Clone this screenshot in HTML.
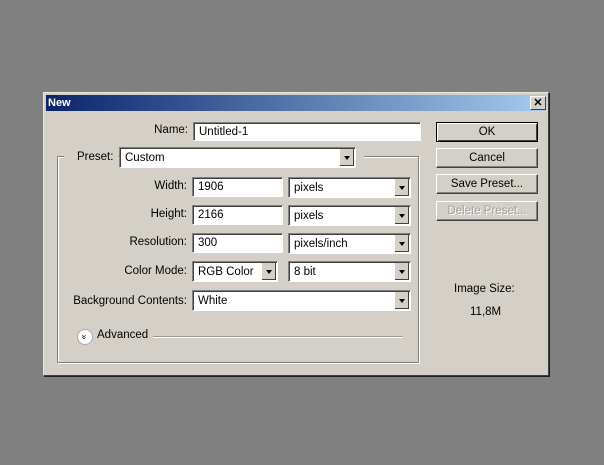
<!DOCTYPE html>
<html><head><style>
body{margin:0;width:604px;height:465px;background:#808080;position:relative;overflow:hidden;font-family:"Liberation Sans",sans-serif;font-size:11.5px;color:#000}
.a{position:absolute}
.dlg{left:43px;top:92px;width:504px;height:282px;background:#d4d0c8;border:1px solid;border-color:#e8e6e0 #404040 #404040 #e8e6e0;box-shadow:1px 1px 0 #202020}
.title{left:46px;top:95px;width:500px;height:16px;background:linear-gradient(90deg,#0a246a,#a6caf0);color:#fff;font-weight:bold;font-size:11px;line-height:16px;text-indent:2px}
.x{left:530px;top:96px;width:14px;height:12px;background:#d4d0c8;border:1px solid;border-color:#fff #404040 #404040 #fff;font-size:11px;line-height:12px;text-align:center;font-weight:bold;color:#000}
.in{background:#fff;border:1px solid;border-color:#808080 #fff #fff #808080;box-shadow:inset 1px 1px 0 #404040;height:18px;line-height:18px;padding-left:5px;box-sizing:border-box}
.dd{background:#fff;border:1px solid;border-color:#808080 #fff #fff #808080;box-shadow:inset 1px 1px 0 #404040;height:21px;line-height:21px;padding-left:5px;box-sizing:border-box}
.dd:after{content:"";position:absolute;right:1px;top:1px;width:14px;height:17px;background:#d4d0c8;border-left:1px solid #fff;box-shadow:inset -1px -1px 0 #404040}
.dd i{position:absolute;right:5px;top:8px;border:3.5px solid transparent;border-top:4px solid #000;z-index:2}
.lbl{text-align:right;width:140px}
.btn{left:436px;width:100px;height:18px;border:1px solid;border-color:#fff #404040 #404040 #fff;box-shadow:inset -1px -1px 0 #808080;text-align:center;line-height:18px;background:#d4d0c8}
.grp{left:57px;top:156px;width:360px;height:205px;border:1px solid #808080;box-shadow:1px 1px 0 #fff,inset 1px 1px 0 #fff}
</style></head><body>
<div class="a dlg"></div>
<div class="a title">New</div>
<div class="a x">✕</div>
<div class="a grp"></div>
<div class="a" style="left:64px;top:150px;width:54px;height:14px;background:#d4d0c8"></div>
<div class="a" style="left:356px;top:150px;width:8px;height:14px;background:#d4d0c8"></div>
<div class="a lbl" style="left:48px;top:124px">Name:</div>
<div class="a in" style="left:193px;top:122px;width:228px;height:19px">Untitled-1</div>
<div class="a" style="left:77px;top:151px">Preset:</div>
<div class="a dd" style="left:119px;top:147px;width:237px">Custom<i></i></div>
<div class="a lbl" style="left:47px;top:180px">Width:</div>
<div class="a in" style="left:192px;top:177px;width:91px;height:20px">1906</div>
<div class="a dd" style="left:288px;top:177px;width:123px">pixels<i></i></div>
<div class="a lbl" style="left:47px;top:208px">Height:</div>
<div class="a in" style="left:192px;top:205px;width:91px;height:20px">2166</div>
<div class="a dd" style="left:288px;top:205px;width:123px">pixels<i></i></div>
<div class="a lbl" style="left:47px;top:236px">Resolution:</div>
<div class="a in" style="left:192px;top:233px;width:91px;height:20px">300</div>
<div class="a dd" style="left:288px;top:233px;width:123px">pixels/inch<i></i></div>
<div class="a lbl" style="left:47px;top:265px">Color Mode:</div>
<div class="a dd" style="left:192px;top:261px;width:86px">RGB Color<i></i></div>
<div class="a dd" style="left:288px;top:261px;width:123px">8 bit<i></i></div>
<div class="a lbl" style="left:27px;top:295px;width:160px">Background Contents:</div>
<div class="a dd" style="left:192px;top:290px;width:219px">White<i></i></div>
<div class="a" style="left:77px;top:329px;width:14px;height:14px;border-radius:50%;background:#fff;border:1px solid #aaa;font-size:9px;line-height:14px;text-align:center"><span style="display:inline-block;transform:rotate(90deg)">»</span></div>
<div class="a" style="left:97px;top:329px">Advanced</div>
<div class="a" style="left:153px;top:336px;width:250px;height:1px;background:#999;border-bottom:1px solid #fff"></div>
<div class="a btn" style="top:122px;border-color:#000;box-shadow:inset 1px 1px 0 #fff,inset -1px -1px 0 #404040">OK</div>
<div class="a btn" style="top:148px">Cancel</div>
<div class="a btn" style="top:174px">Save Preset...</div>
<div class="a btn" style="top:201px;color:#a0a0a0;text-shadow:1px 1px 0 #fff">Delete Preset...</div>
<div class="a" style="left:454px;top:283px">Image Size:</div>
<div class="a" style="left:470px;top:306px">11,8M</div>
</body></html>
